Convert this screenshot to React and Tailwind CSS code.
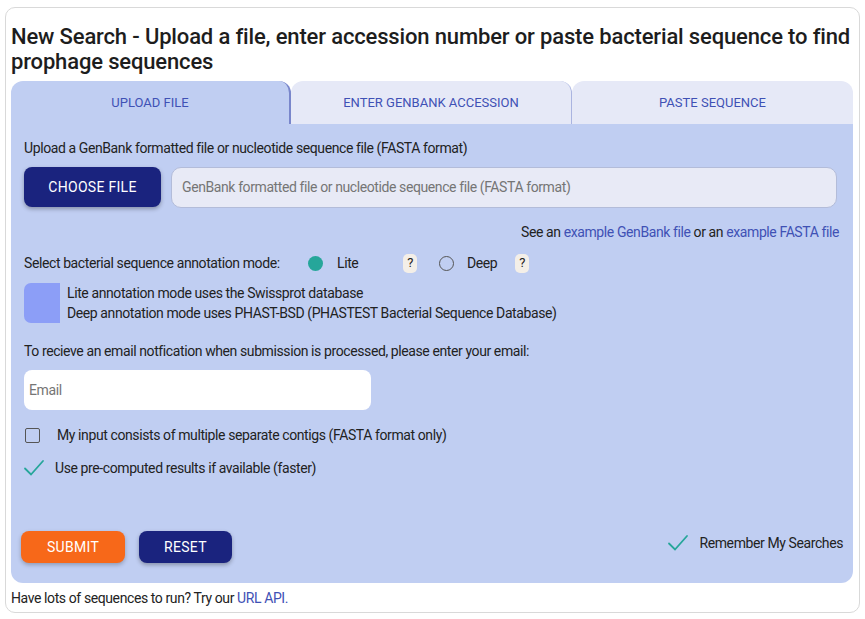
import React from "react";

function Check({ className = "" }) {
  return (
    <svg width="22" height="18" viewBox="0 0 22 18" className={className}>
      <path d="M2 9.5 L8 15.5 L20 2" fill="none" stroke="#26a69a" strokeWidth="1.8" strokeLinecap="round" />
    </svg>
  );
}

export default function App() {
  return (
    <div className="w-[865px] h-[619px] bg-white pt-[7px] px-[5px]" style={{ fontFamily: 'Roboto, sans-serif' }}>
      <div className="w-[855px] h-[606px] border border-[#d9d9d9] rounded-[10px] px-[5px] pt-[16px] text-[#222]">
        <h1 className="text-[22px] leading-[25px] font-medium text-[#1d1d1d] tracking-[-0.15px]">
          New Search - Upload a file, enter accession number or paste bacterial sequence to find prophage sequences
        </h1>
        <div className="mt-[7px] w-[842px]">
          <div className="flex h-[43px] text-[13px] text-[#3f51b5]">
            <div className="w-[280px] bg-[#c0cef2] rounded-t-[12px] flex items-center justify-center border-r-2 border-[#7986cb]">
              UPLOAD FILE
            </div>
            <div className="w-[281px] bg-[#e6e9f7] rounded-t-[12px] flex items-center justify-center border-r border-[#aab4e0]">
              ENTER GENBANK ACCESSION
            </div>
            <div className="w-[281px] bg-[#e6e9f7] rounded-t-[12px] flex items-center justify-center">
              PASTE SEQUENCE
            </div>
          </div>
          <div className="bg-[#c0cef2] rounded-b-[12px] h-[459px] px-[13px] pt-[14px] text-[14px] text-[#222] tracking-[-0.4px]">
            <div className="leading-[20px]">Upload a GenBank formatted file or nucleotide sequence file (FASTA format)</div>
            <div className="flex gap-[10px] mt-[9px]">
              <button className="w-[137px] h-[40px] bg-[#1a237e] text-white rounded-[8px] text-[14px] tracking-[0.3px] shadow-[0_2px_4px_rgba(0,0,0,0.3)]">
                CHOOSE FILE
              </button>
              <div className="w-[666px] h-[41px] bg-[#e8eaf6] border border-[#b3bcd9] rounded-[10px] flex items-center px-[10px] text-[#757575] text-[14px]">
                GenBank formatted file or nucleotide sequence file (FASTA format)
              </div>
            </div>
            <div className="flex justify-end mt-[14px] pr-[1px] leading-[20px]">
              <span>
                See an <span className="text-[#3f51b5]">example GenBank file</span> or an{" "}
                <span className="text-[#3f51b5]">example FASTA file</span>
              </span>
            </div>
            <div className="flex items-center mt-[11px] h-[20px]">
              <span className="w-[284px]">Select bacterial sequence annotation mode:</span>
              <span className="w-[15px] h-[15px] rounded-full bg-[#26a69a]"></span>
              <span className="ml-[14px] w-[66px]">Lite</span>
              <span className="w-[14px] h-[19px] rounded-[5px] bg-[#f4efe8] flex items-center justify-center text-[13px]">?</span>
              <span className="ml-[22px] w-[15px] h-[15px] rounded-full border-[1.5px] border-[#555]"></span>
              <span className="ml-[13px] w-[48px]">Deep</span>
              <span className="w-[14px] h-[19px] rounded-[5px] bg-[#f4efe8] flex items-center justify-center text-[13px]">?</span>
            </div>
            <div className="flex mt-[10px] h-[40px]">
              <div className="w-[36px] bg-[#8c9ef7] rounded-l-[7px]"></div>
              <div className="ml-[7px] leading-[20px]">
                <div>Lite annotation mode uses the Swissprot database</div>
                <div>Deep annotation mode uses PHAST-BSD (PHASTEST Bacterial Sequence Database)</div>
              </div>
            </div>
            <div className="mt-[18px] leading-[20px]">
              To recieve an email notfication when submission is processed, please enter your email:
            </div>
            <div className="mt-[9px] w-[347px] h-[40px] bg-white rounded-[8px] flex items-center px-[5px] text-[#757575]">
              Email
            </div>
            <div className="flex items-center mt-[15px] h-[20px]">
              <span className="ml-[1px] w-[15px] h-[15px] border-[1.5px] border-[#555] rounded-[2px]"></span>
              <span className="ml-[17px]">My input consists of multiple separate contigs (FASTA format only)</span>
            </div>
            <div className="flex items-center mt-[13px] h-[20px]">
              <Check className="-ml-[1px]" />
              <span className="ml-[10px]">Use pre-computed results if available (faster)</span>
            </div>
            <div className="flex items-center mt-[53px] -ml-[3px]">
              <button className="w-[104px] h-[32px] bg-[#f76819] text-white rounded-[8px] text-[14px] tracking-[0.3px] shadow-[0_2px_4px_rgba(0,0,0,0.25)]">
                SUBMIT
              </button>
              <button className="ml-[14px] w-[93px] h-[32px] bg-[#1a237e] text-white rounded-[8px] text-[14px] tracking-[0.3px] shadow-[0_2px_4px_rgba(0,0,0,0.3)]">
                RESET
              </button>
              <div className="ml-auto flex items-center -mt-[8px] mr-[-3px]">
                <Check />
                <span className="ml-[10px]">Remember My Searches</span>
              </div>
            </div>
          </div>
          <div className="mt-[5px] text-[14px] leading-[20px] tracking-[-0.4px]">
            Have lots of sequences to run? Try our <span className="text-[#3f51b5]">URL API.</span>
          </div>
        </div>
      </div>
    </div>
  );
}
